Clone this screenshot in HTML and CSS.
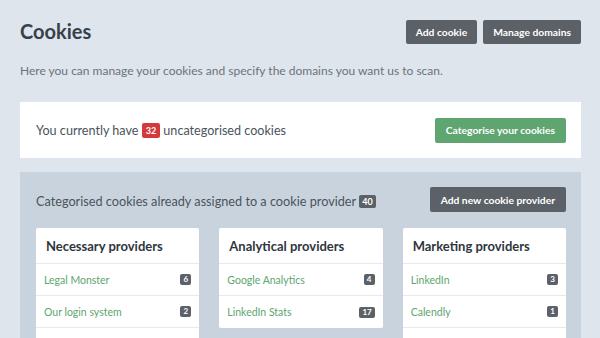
FILE: index.html
```html
<!DOCTYPE html>
<html>
<head>
<meta charset="utf-8">
<link rel="stylesheet" href="styles.css">
</head>
<body>
<div class="page">
  <header class="top">
    <h1 class="title">Cookies</h1>
    <div class="actions">
      <button class="btn btn-dark">Add cookie</button>
      <button class="btn btn-dark">Manage domains</button>
    </div>
  </header>
  <p class="intro">Here you can manage your cookies and specify the domains you want us to scan.</p>

  <section class="notice">
    <span class="notice-text">You currently have <span class="badge badge-red">32</span> uncategorised cookies</span>
    <button class="btn btn-green">Categorise your cookies</button>
  </section>

  <section class="assigned">
    <div class="assigned-head">
      <span class="assigned-text">Categorised cookies already assigned to a cookie provider <span class="badge badge-dark">40</span></span>
      <button class="btn btn-dark btn-lg">Add new cookie provider</button>
    </div>
    <div class="cols">
      <div class="card">
        <div class="card-head">Necessary providers</div>
        <div class="row"><span class="link">Legal Monster</span><span class="count">6</span></div>
        <div class="row"><span class="link">Our login system</span><span class="count">2</span></div>
        <div class="row"><span class="link">&nbsp;</span></div>
      </div>
      <div class="card">
        <div class="card-head">Analytical providers</div>
        <div class="row"><span class="link">Google Analytics</span><span class="count">4</span></div>
        <div class="row"><span class="link">LinkedIn Stats</span><span class="count">17</span></div>
      </div>
      <div class="card">
        <div class="card-head">Marketing providers</div>
        <div class="row"><span class="link">LinkedIn</span><span class="count">3</span></div>
        <div class="row"><span class="link">Calendly</span><span class="count">1</span></div>
        <div class="row"><span class="link">&nbsp;</span></div>
      </div>
    </div>
  </section>
</div>
</body>
</html>
```
FILE: styles.css
```css
* { box-sizing: border-box; }
html, body { margin: 0; padding: 0; }
body {
  background: #dfe5ec;
  font-family: Lato, "Noto Sans", sans-serif;
  color: #4a5259;
  width: 600px;
  height: 338px;
  overflow: hidden;
}
.page { padding: 20px 19px 0 20px; }
.top {
  display: flex;
  justify-content: space-between;
  align-items: flex-start;
  height: 24px;
}
.title {
  margin: 0;
  font-size: 20px;
  font-weight: 700;
  color: #36414c;
  line-height: 22px;
}
.actions { display: flex; gap: 6px; }
.btn {
  border: 0;
  border-radius: 2px;
  font-family: inherit;
  font-weight: 700;
  font-size: 10.3px;
  color: #fff;
  height: 24px;
  padding: 0 10px;
  cursor: pointer;
}
.btn-dark { background: #5b6166; }
.btn-green { background: #5ea56f; height: 25px; padding: 0 11px; }
.btn-lg { height: 25px; padding: 0 11px; }
.intro {
  margin: 20px 0 0;
  font-size: 12px;
  line-height: 14px;
  color: #6b737b;
}
.notice {
  margin-top: 24px;
  background: #fff;
  height: 56px;
  padding: 0 15px 0 16px;
  display: flex;
  justify-content: space-between;
  align-items: center;
}
.notice-text { font-size: 12.6px; color: #4b535a; }
.badge {
  display: inline-block;
  font-size: 9px;
  font-weight: 700;
  color: #fff;
  border-radius: 2px;
  padding: 1px 3px;
  line-height: 11px;
  vertical-align: 1px;
}
.badge-red { background: #d6393d; padding: 2px 4px; }
.badge-dark { background: #5b6166; }
.assigned {
  margin-top: 14px;
  background: #c9d3de;
  padding: 15px 15px 20px 16px;
}
.assigned-head {
  display: flex;
  justify-content: space-between;
  align-items: center;
  height: 25px;
}
.assigned-text { font-size: 12.7px; color: #4b535a; padding-top: 3px; }
.cols {
  margin-top: 16px;
  display: grid;
  grid-template-columns: repeat(3, 1fr);
  column-gap: 20px;
  align-items: start;
}
.card { background: #fff; border-radius: 2px; }
.card-head {
  height: 36px;
  display: flex;
  align-items: center;
  padding: 1px 10px 0;
  font-size: 13px;
  font-weight: 700;
  color: #2f363d;
  border-bottom: 1px solid #e6eaee;
}
.row {
  height: 32px;
  display: flex;
  align-items: center;
  justify-content: space-between;
  padding: 0 8px;
  border-bottom: 1px solid #e6eaee;
}
.row:last-child { border-bottom: 0; }
.link { font-size: 10.5px; color: #5ea56f; }
.count {
  font-size: 8px;
  font-weight: 700;
  color: #fff;
  background: #5b6166;
  border-radius: 2px;
  min-width: 11px;
  text-align: center;
  padding: 1px 3px;
  line-height: 9px;
}
```
